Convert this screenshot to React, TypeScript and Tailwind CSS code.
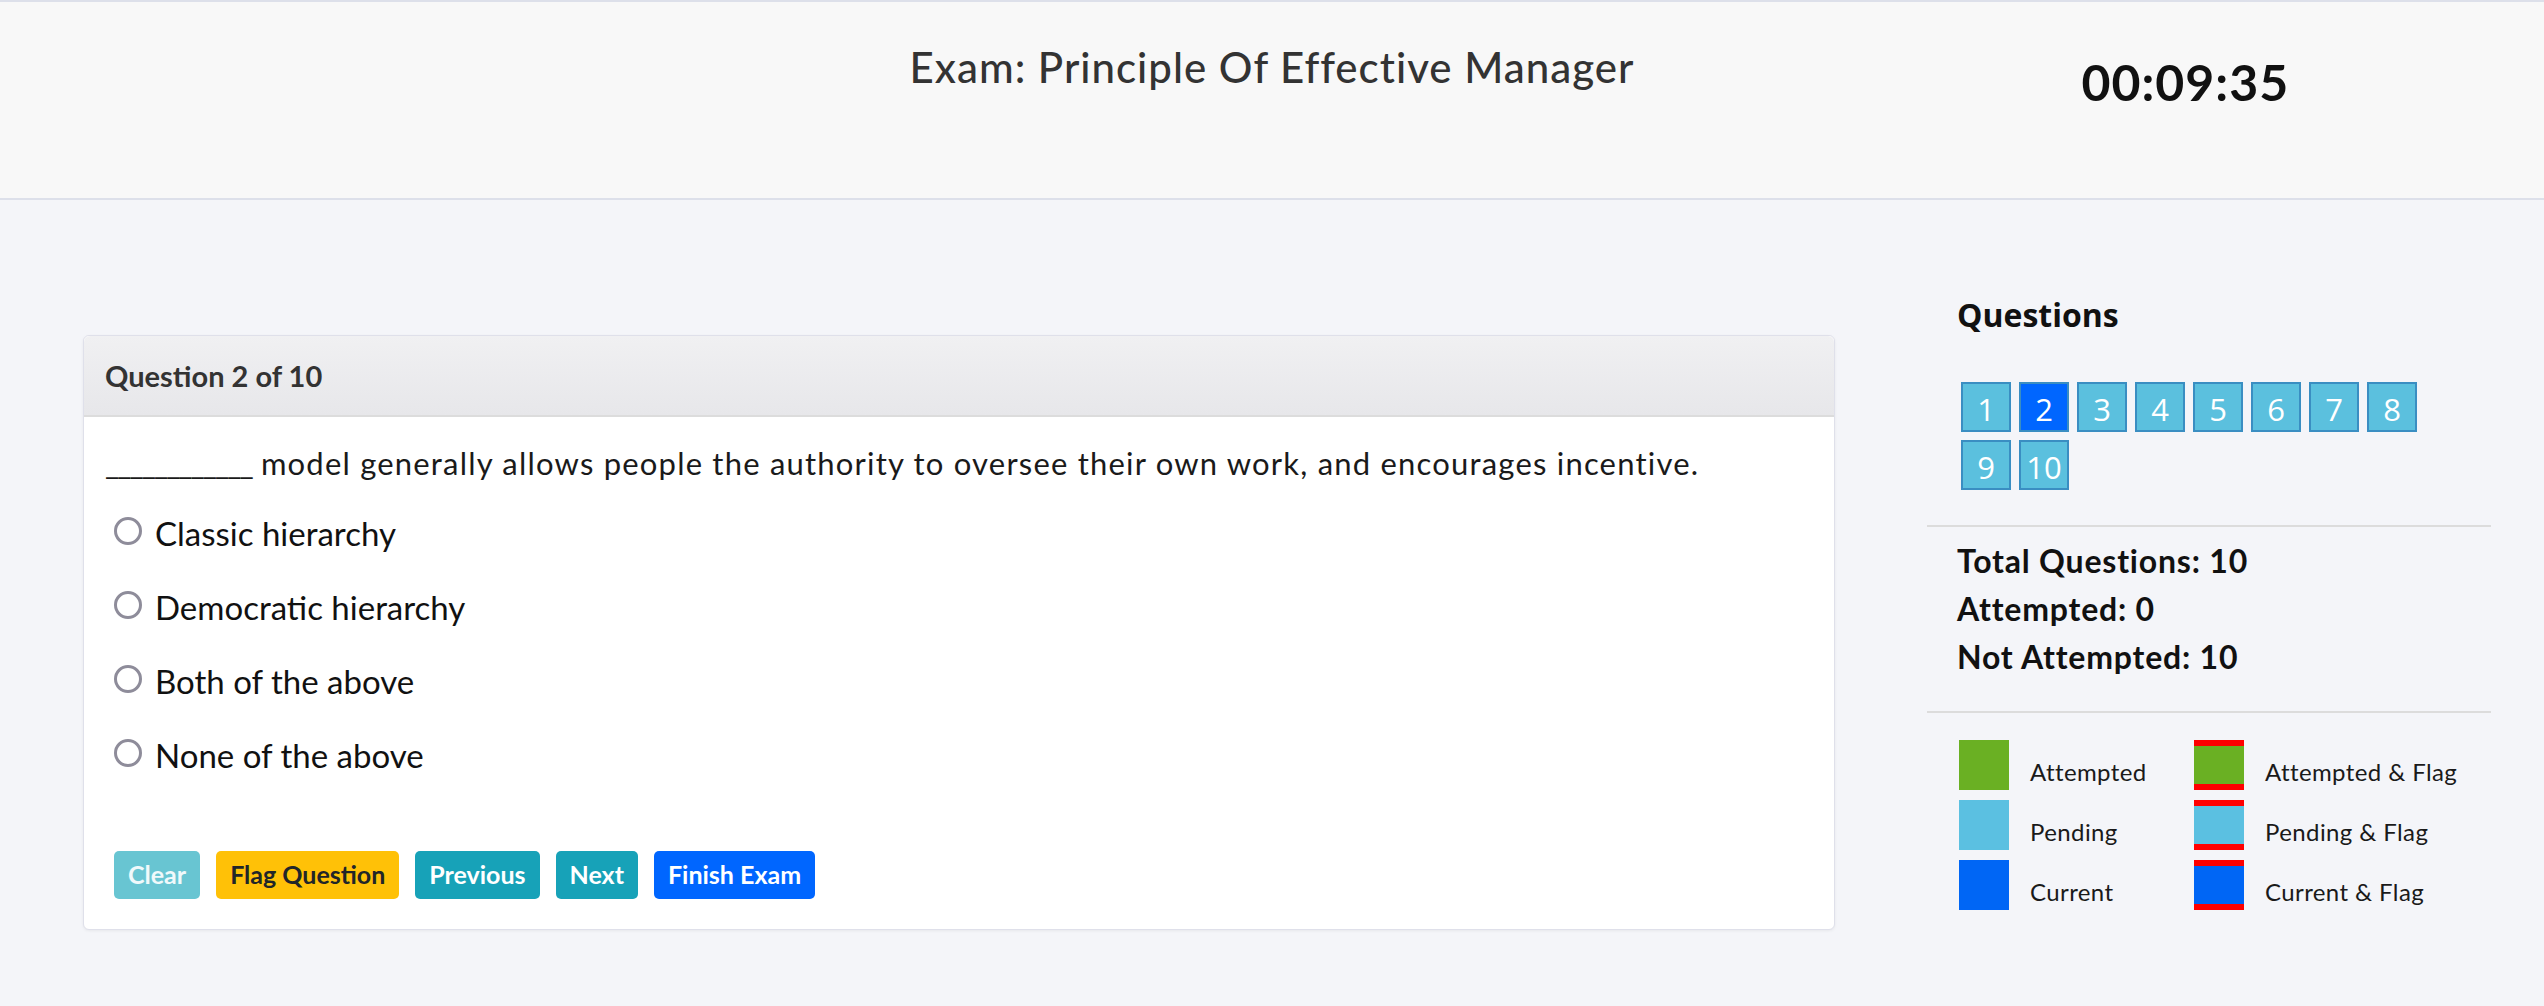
import React from 'react';

const questions = [1, 2, 3, 4, 5, 6, 7, 8, 9, 10];
const current = 2;

const options = ['Classic hierarchy', 'Democratic hierarchy', 'Both of the above', 'None of the above'];

const legend = [
  { label: 'Attempted', color: 'bg-[#6ab023]', flag: false },
  { label: 'Attempted & Flag', color: 'bg-[#6ab023]', flag: true },
  { label: 'Pending', color: 'bg-[#5bc0e1]', flag: false },
  { label: 'Pending & Flag', color: 'bg-[#5bc0e1]', flag: true },
  { label: 'Current', color: 'bg-[#0066f5]', flag: false },
  { label: 'Current & Flag', color: 'bg-[#0066f5]', flag: true },
];

function Header() {
  return (
    <header className="h-[200px] border-t-2 border-b-2 border-[#dde0ea] bg-[#f8f8f8]">
      <div className="grid grid-cols-[1fr_auto_1fr] items-start">
        <div />
        <h1 className="pt-[40px] text-[42px] leading-[50px] font-medium tracking-[1px] text-[#333]">
          Exam: Principle Of Effective Manager
        </h1>
        <div>
          <div className="ml-[447px] pt-[50px] text-[50px] leading-[60px] font-bold tracking-[1px] text-[#111]">
            00:09:35
          </div>
        </div>
      </div>
    </header>
  );
}

function QuestionCard() {
  return (
    <div className="mt-[42px] w-[1752px] rounded-[6px] border border-[#dfe0ea] bg-white shadow-[0_1px_3px_rgba(0,0,0,0.06)]">
      {/* Header */}
      <div className="flex h-[81px] items-center rounded-t-[6px] border-b-2 border-[#dcdcdc] bg-gradient-to-b from-[#f0f0f2] to-[#e7e7ea] px-[21px]">
        <span className="text-[29px] leading-[34px] font-bold text-[#333]">Question 2 of 10</span>
      </div>

      {/* Body */}
      <div className="px-[21px] pt-[24px] pb-[30px]">
        <p className="text-[31px] leading-[45px] tracking-[1.2px] text-[#1a1a1a]">
          <span className="tracking-[-2px]">____________</span> model generally allows people the authority to oversee their own work, and encourages incentive.
        </p>

        <div className="mt-[10px] ml-[9px]">
          {options.map((opt) => (
            <label key={opt} className="flex h-[74px] items-center gap-[13px]">
              <span className="mb-[5px] h-[28px] w-[28px] shrink-0 rounded-full border-[3px] border-[#8e8c9a] bg-white" />
              <span className="text-[33px] leading-[74px] text-[#111]">{opt}</span>
            </label>
          ))}
        </div>

        <div className="mt-[59px] ml-[9px] flex gap-[16px] text-[25px] font-bold">
          <button className="h-[48px] rounded-[5px] bg-[#68c5d2] px-[14px] text-white/90">Clear</button>
          <button className="h-[48px] rounded-[5px] bg-[#ffc107] px-[14px] text-[#212529]">Flag Question</button>
          <button className="h-[48px] rounded-[5px] bg-[#17a2b8] px-[14px] text-white">Previous</button>
          <button className="h-[48px] rounded-[5px] bg-[#17a2b8] px-[14px] text-white">Next</button>
          <button className="h-[48px] rounded-[5px] bg-[#0066ff] px-[14px] text-white">Finish Exam</button>
        </div>
      </div>
    </div>
  );
}

function Sidebar() {
  return (
    <aside className="ml-[92px] w-[564px]">
      <h4 className="pl-[30px] text-[32px] leading-[44px] font-bold text-[#111] [font-family:'Open_Sans',sans-serif]">
        Questions
      </h4>

      <div className="mt-[45px] ml-[34px] flex w-[470px] flex-wrap gap-[8px] [font-family:'Open_Sans',sans-serif]">
        {questions.map((n) => (
          <div
            key={n}
            className={`flex h-[50px] w-[50px] items-center justify-center border-2 border-[#3a8ec2] pt-[4px] text-[31px] leading-none text-white ${
              n === current ? 'bg-[#0066ff]' : 'bg-[#5bc0de]'
            }`}
          >
            {n}
          </div>
        ))}
      </div>

      <div className="mt-[35px] border-t-2 border-[#dcdcdc] pt-[10px] pb-[30px] pl-[30px] text-[32px] leading-[48px] font-bold tracking-[0.8px] text-[#111]">
        <div>Total Questions: 10</div>
        <div>Attempted: 0</div>
        <div>Not Attempted: 10</div>
      </div>

      <div className="grid grid-cols-[235px_1fr] gap-y-[10px] border-t-2 border-[#dcdcdc] pt-[27px] pl-[32px]">
        {legend.map((item) => (
          <div key={item.label} className="flex h-[50px] items-center gap-[21px]">
            <span
              className={`h-[50px] w-[50px] shrink-0 ${item.color} ${item.flag ? 'border-y-[6px] border-[#ff0000]' : ''}`}
            />
            <span className="mt-[12px] text-[24px] leading-[29px] tracking-[0.4px] text-[#1a1a1a]">{item.label}</span>
          </div>
        ))}
      </div>
    </aside>
  );
}

export default function App() {
  return (
    <div className="min-h-[1006px] bg-[#f4f5f9] [font-family:Lato,'Liberation_Sans',sans-serif]">
      <Header />
      <main className="flex items-start pt-[93px] pl-[83px]">
        <QuestionCard />
        <Sidebar />
      </main>
    </div>
  );
}
